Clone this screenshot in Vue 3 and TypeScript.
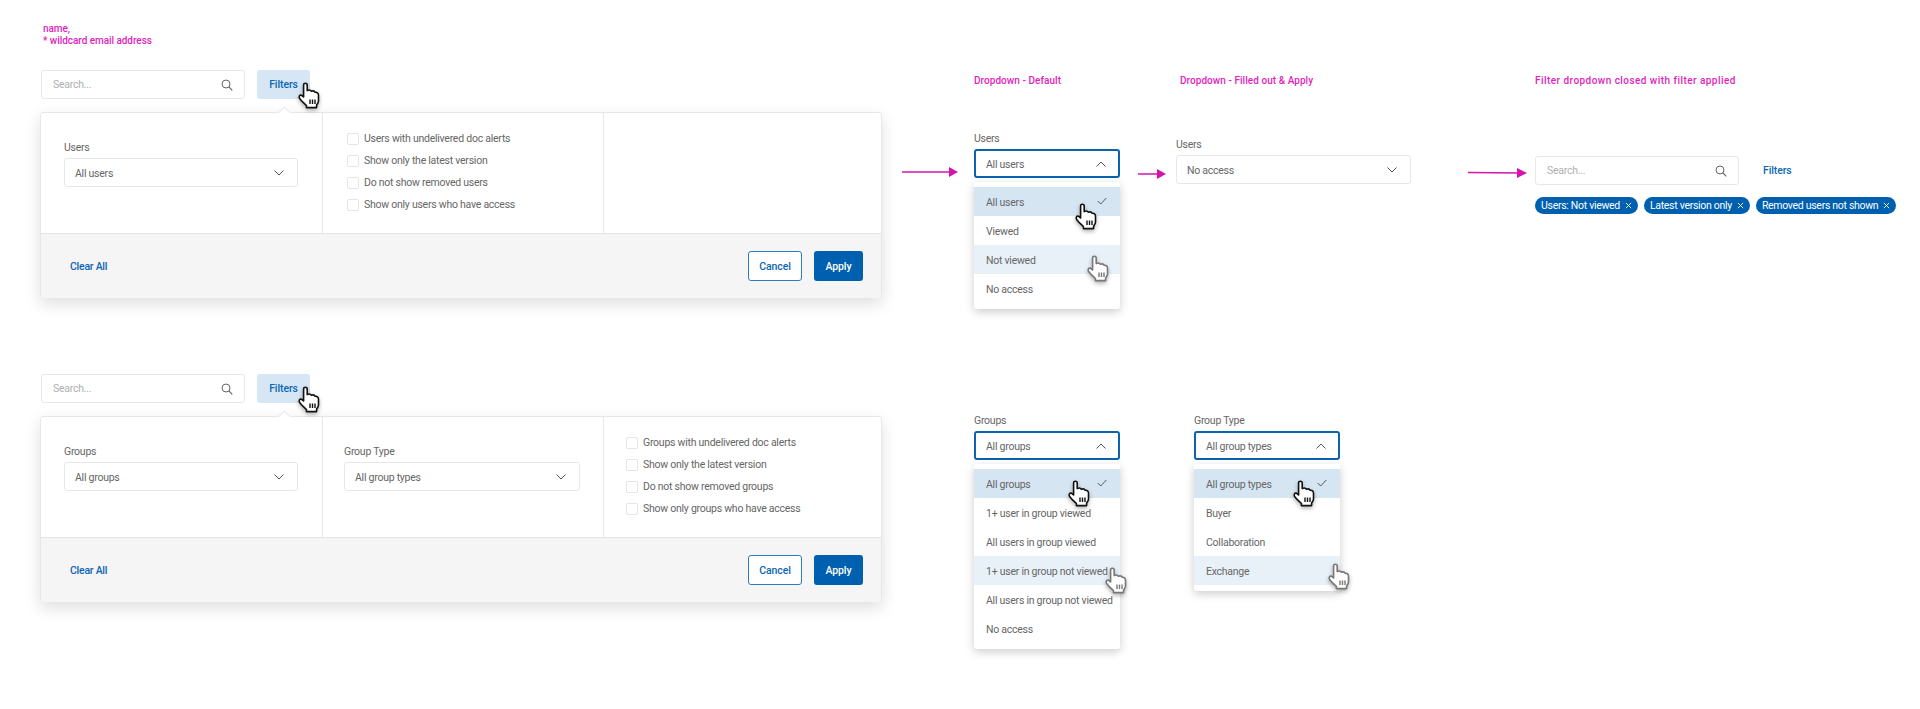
<script setup lang="ts">
interface Item { text: string; state?: 'selected' | 'hover'; hand?: [number, number] }

const userItems: Item[] = [
  { text: 'All users', state: 'selected', hand: [101, 16] },
  { text: 'Viewed' },
  { text: 'Not viewed', state: 'hover', hand: [113, 10] },
  { text: 'No access' }
]
const groupItems: Item[] = [
  { text: 'All groups', state: 'selected', hand: [94, 11] },
  { text: '1+ user in group viewed' },
  { text: 'All users in group viewed' },
  { text: '1+ user in group not viewed', state: 'hover', hand: [131, 11] },
  { text: 'All users in group not viewed' },
  { text: 'No access' }
]
const typeItems: Item[] = [
  { text: 'All group types', state: 'selected', hand: [99, 11] },
  { text: 'Buyer' },
  { text: 'Collaboration' },
  { text: 'Exchange', state: 'hover', hand: [134, 7] }
]
const userChecks: string[] = [
  'Users with undelivered doc alerts',
  'Show only the latest version',
  'Do not show removed users',
  'Show only users who have access'
]
const groupChecks: string[] = [
  'Groups with undelivered doc alerts',
  'Show only the latest version',
  'Do not show removed groups',
  'Show only groups who have access'
]
const chips: string[] = ['Users: Not viewed', 'Latest version only', 'Removed users not shown']
const dropdowns = [
  { label: 'Groups', value: 'All groups', items: groupItems, cls: 'drop-groups' },
  { label: 'Group Type', value: 'All group types', items: typeItems, cls: 'drop-types' }
]
const handPos = (h: [number, number]) => ({ left: h[0] + 'px', top: h[1] + 'px' })
</script>

<template>
  <div class="board">
    <svg class="defs" width="0" height="0" aria-hidden="true">
      <symbol id="hand" viewBox="0 0 22 27">
        <path d="M5.6 3C5.6.6 9.2.6 9.2 3v5.6c1.9-1 3.4-.5 4 .6 1.900-.6 3.400-.1 4 1.100 1.900-.2 3.300 1 3.300 2.800v6c0 1.900-1.300 2.900-1.900 3.900v2.600H8.400v-2.100C6.200 21.500 3.300 19 1.700 16.500.5 14.500 1.700 12.500 3.700 13.300L5.600 15Z" fill="#fff" stroke="currentColor" stroke-width="1.600" stroke-linejoin="round" />
        <path d="M12 17.500v4.500M14.500 17.500v4.500M17 17.500v4.500" fill="none" stroke="currentColor" stroke-width="1.400" />
      </symbol>
      <symbol id="search" viewBox="0 0 12 12">
        <circle cx="5" cy="5" r="4" fill="none" stroke="#666" stroke-width="1" />
        <path d="M8 8l3.300 3.300" stroke="#666" stroke-width="1.100" fill="none" />
      </symbol>
      <symbol id="chev" viewBox="0 0 10 6">
        <path d="M.5.5 5 5 9.500.5" fill="none" stroke="#555" stroke-width="1" />
      </symbol>
    </svg>

    <div class="note">name,<br />* wildcard email address</div>

    <section class="row">
      <div class="main">
        <div class="toolbar">
          <div class="search"><span>Search...</span><svg class="search-icon"><use href="#search" /></svg></div>
          <button class="filters active">Filters
            <svg class="hand filter-hand"><use href="#hand" /></svg>
          </button>
        </div>
        <div class="panel">
          <span class="caret"></span>
          <div class="panel-body">
            <div class="cell">
              <div class="label">Users</div>
              <div class="select"><span>All users</span><svg class="chev"><use href="#chev" /></svg></div>
            </div>
            <div class="cell checks">
              <label v-for="c in userChecks" :key="c" class="check"><i></i>{{ c }}</label>
            </div>
            <div class="cell"></div>
          </div>
          <div class="panel-foot">
            <a class="clear">Clear All</a>
            <div class="actions"><button class="btn cancel">Cancel</button><button class="btn apply">Apply</button></div>
          </div>
        </div>
      </div>

      <svg class="arrow arrow-1" viewBox="0 0 56 12"><path d="M0 6h48" stroke="#d315ad" stroke-width="1.500" /><path d="M47 1l9 5-9 5z" fill="#d315ad" /></svg>

      <div class="col col-default">
        <div class="caption">Dropdown - Default</div>
        <div class="label top-a">Users</div>
        <div class="select open"><span>All users</span><svg class="chev up"><use href="#chev" /></svg></div>
        <div class="menu">
          <div v-for="it in userItems" :key="it.text" class="item" :class="it.state">
            {{ it.text }}
            <svg v-if="it.state === 'selected'" class="tick" viewBox="0 0 10 8"><path d="M.7 4 3.700 7 9.300 1" fill="none" stroke="#555" stroke-width="1" /></svg>
            <svg v-if="it.hand" class="hand" :class="{ faded: it.state === 'hover' }" :style="handPos(it.hand)"><use href="#hand" /></svg>
          </div>
        </div>
      </div>

      <svg class="arrow arrow-2" viewBox="0 0 28 12"><path d="M0 6h20" stroke="#d315ad" stroke-width="1.500" /><path d="M19 1l9 5-9 5z" fill="#d315ad" /></svg>

      <div class="col col-filled">
        <div class="caption shifted">Dropdown - Filled out &amp; Apply</div>
        <div class="label top-b">Users</div>
        <div class="select"><span>No access</span><svg class="chev"><use href="#chev" /></svg></div>
      </div>

      <svg class="arrow arrow-3" viewBox="0 0 59 12"><path d="M0 5.500l50 .5" stroke="#d315ad" stroke-width="1.500" /><path d="M49 1l10 5-10 5z" fill="#d315ad" /></svg>

      <div class="col col-closed">
        <div class="caption spaced">Filter dropdown closed with filter applied</div>
        <div class="toolbar closed-bar">
          <div class="search"><span>Search...</span><svg class="search-icon"><use href="#search" /></svg></div>
          <button class="filters plain">Filters</button>
        </div>
        <div class="chips">
          <span v-for="c in chips" :key="c" class="chip">{{ c }}
            <svg viewBox="0 0 8 8"><path d="M1 1l6 6M7 1 1 7" stroke="#fff" stroke-width="1" /></svg>
          </span>
        </div>
      </div>
    </section>

    <section class="row">
      <div class="main">
        <div class="toolbar">
          <div class="search"><span>Search...</span><svg class="search-icon"><use href="#search" /></svg></div>
          <button class="filters active">Filters
            <svg class="hand filter-hand"><use href="#hand" /></svg>
          </button>
        </div>
        <div class="panel">
          <span class="caret"></span>
          <div class="panel-body">
            <div class="cell">
              <div class="label">Groups</div>
              <div class="select"><span>All groups</span><svg class="chev"><use href="#chev" /></svg></div>
            </div>
            <div class="cell">
              <div class="label">Group Type</div>
              <div class="select"><span>All group types</span><svg class="chev"><use href="#chev" /></svg></div>
            </div>
            <div class="cell checks">
              <label v-for="c in groupChecks" :key="c" class="check"><i></i>{{ c }}</label>
            </div>
          </div>
          <div class="panel-foot">
            <a class="clear">Clear All</a>
            <div class="actions"><button class="btn cancel">Cancel</button><button class="btn apply">Apply</button></div>
          </div>
        </div>
      </div>

      <div v-for="d in dropdowns" :key="d.label" class="col" :class="d.cls">
        <div class="label">{{ d.label }}</div>
        <div class="select open"><span>{{ d.value }}</span><svg class="chev up"><use href="#chev" /></svg></div>
        <div class="menu">
          <div v-for="it in d.items" :key="it.text" class="item" :class="it.state">
            {{ it.text }}
            <svg v-if="it.state === 'selected'" class="tick" viewBox="0 0 10 8"><path d="M.7 4 3.700 7 9.300 1" fill="none" stroke="#555" stroke-width="1" /></svg>
            <svg v-if="it.hand" class="hand" :class="{ faded: it.state === 'hover' }" :style="handPos(it.hand)"><use href="#hand" /></svg>
          </div>
        </div>
      </div>
    </section>
  </div>
</template>

<style>
html, body { margin: 0; background: #fff; }
</style>

<style scoped>
.board {
  width: 1920px;
  height: 709px;
  overflow: hidden;
  background: #fff;
  color: #666;
  font-family: Roboto, "Liberation Sans", sans-serif;
  font-size: 10.5px;
  letter-spacing: -.25px;
  line-height: 14px;
}
.defs { position: absolute; }
.note {
  box-sizing: border-box;
  height: 70px;
  padding: 23px 0 0 43px;
  font-size: 10px;
  line-height: 12px;
  font-weight: 500;
  letter-spacing: -.05px;
  color: #e01fbe;
}
.row { display: flex; align-items: flex-start; height: 304px; }
.main { margin-left: 41px; width: 841px; flex: none; }
.toolbar { display: flex; gap: 12px; height: 29px; margin-bottom: 13px; }
.search {
  box-sizing: border-box;
  width: 204px;
  height: 29px;
  display: flex;
  align-items: center;
  justify-content: space-between;
  padding: 0 11px;
  border: 1px solid #e8e8e8;
  border-radius: 3px;
  color: #b0b0b0;
}
.search-icon { width: 12px; height: 12px; }
.filters {
  position: relative;
  width: 53px;
  height: 29px;
  padding: 1px 0 0;
  border: 0;
  border-radius: 3px;
  background: none;
  color: #0b66b4;
  font: 500 10.5px/14px Roboto, "Liberation Sans", sans-serif;
  letter-spacing: -.1px;
}
.filters.active { background: #d6e6f4; }
.filters.plain { text-align: left; margin-left: 12px; }
.hand {
  position: absolute;
  width: 22px;
  height: 27px;
  color: #111;
  filter: drop-shadow(0 2px 2px rgba(0, 0, 0, .3));
  z-index: 2;
}
.hand.faded { color: #777; }
.filter-hand { left: 41px; top: 12px; }
.panel {
  position: relative;
  box-sizing: border-box;
  width: 842px;
  height: 186px;
  margin-left: -1px;
  border: 1px solid #e7e7e7;
  border-radius: 3px;
  background: #fff;
  box-shadow: 0 6px 16px rgba(0, 0, 0, .13);
}
.caret {
  position: absolute;
  left: 239px;
  top: -5px;
  width: 8px;
  height: 8px;
  background: #fff;
  border-left: 1px solid #e7e7e7;
  border-top: 1px solid #e7e7e7;
  transform: rotate(45deg);
}
.panel-body { display: flex; height: 120px; border-bottom: 1px solid #e4e4e4; }
.cell {
  box-sizing: border-box;
  flex: 0 0 281px;
  padding: 27px 23px 0 21px;
  border-left: 1px solid #e7e7e7;
}
.cell:first-child { border-left: 0; padding-left: 23px; padding-right: 24px; }
.cell:last-child { flex: 1; }
.label { height: 14px; line-height: 16px; margin-bottom: 4px; white-space: nowrap; }
.select {
  box-sizing: border-box;
  height: 29px;
  display: flex;
  align-items: center;
  justify-content: space-between;
  padding: 0 13px 0 10px;
  border: 1px solid #e7e7e7;
  border-radius: 3px;
  background: #fff;
}
.select span { padding-top: 2px; }
.select.open { border: 2px solid #0b62ad; padding: 0 12px 0 10px; }
.chev { width: 10px; height: 6px; }
.chev.up { transform: rotate(180deg); }
.cell.checks { padding: 15px 0 0 24px; }
.cell.checks:last-child { padding-left: 22px; }
.check { display: flex; align-items: center; height: 22px; white-space: nowrap; }
.check i {
  box-sizing: border-box;
  width: 12px;
  height: 12px;
  margin-right: 5px;
  border: 1px solid #e5e5e5;
  border-radius: 2px;
  background: #fff;
}
.panel-foot {
  display: flex;
  align-items: center;
  justify-content: space-between;
  height: 64px;
  padding: 0 18px 0 29px;
  background: #f5f5f5;
  border-radius: 0 0 3px 3px;
}
.clear { color: #0b66b4; font-weight: 500; padding-top: 2px; }
.actions { display: flex; gap: 12px; }
.btn {
  box-sizing: border-box;
  height: 30px;
  padding: 1px 0 0;
  border-radius: 3px;
  font: 500 10.5px/14px Roboto, "Liberation Sans", sans-serif;
  letter-spacing: -.1px;
}
.cancel { width: 54px; border: 1px solid #2a7cc4; background: #fff; color: #0b66b4; }
.apply { width: 49px; border: 0; background: #0060b0; color: #fff; }
.arrow { flex: none; height: 12px; }
.arrow-1 { width: 56px; margin: 96px 16px 0 20px; }
.arrow-2 { width: 28px; margin: 98px 10px 0 18px; }
.arrow-3 { width: 59px; margin: 97px 8px 0 57px; }
.col { flex: none; width: 146px; }
.col-filled { width: 235px; }
.col-closed { width: 370px; }
.caption {
  height: 14px;
  margin: 3px 0 0;
  line-height: 16px;
  color: #e01fbe;
  font-size: 10px;
  font-weight: 500;
  letter-spacing: .05px;
  white-space: nowrap;
}
.caption.shifted { padding-left: 4px; }
.caption.spaced { letter-spacing: .45px; }
.top-a { margin-top: 44px; }
.top-b { margin-top: 50px; }
.closed-bar { margin-top: 69px; margin-bottom: 12px; }
.drop-groups { margin-left: 92px; padding-top: 39px; }
.drop-types { margin-left: 74px; padding-top: 39px; }
.menu {
  margin-top: 4px;
  padding: 5px 0 6px;
  background: #fff;
  border-radius: 3px;
  box-shadow: 0 3px 10px rgba(0, 0, 0, .2);
}
.item {
  position: relative;
  box-sizing: border-box;
  height: 29px;
  padding: 2px 0 0 12px;
  display: flex;
  align-items: center;
  white-space: nowrap;
}
.item.selected { background: #d6e5f2; }
.item.hover { background: #e9f1f8; }
.tick { position: absolute; right: 13px; top: 10px; width: 10px; height: 8px; }
.chips { display: flex; gap: 6px; }
.chip {
  display: flex;
  align-items: center;
  gap: 5px;
  height: 17px;
  padding: 0 6px;
  border-radius: 9px;
  background: #0060b0;
  color: #fff;
  letter-spacing: -.3px;
  white-space: nowrap;
}
.chip svg { width: 7px; height: 7px; }
</style>
